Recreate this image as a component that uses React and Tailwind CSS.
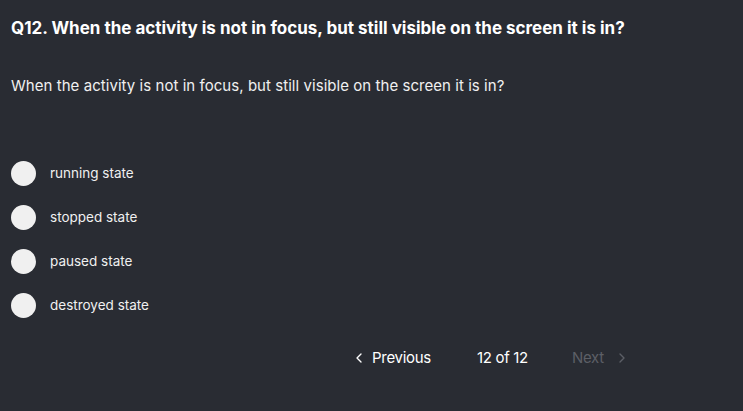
import React from 'react';
import { ChevronLeft, ChevronRight } from 'lucide-react';

const OPTIONS = ['running state', 'stopped state', 'paused state', 'destroyed state'];

export default function App() {
  return (
    <div className="w-[743px] h-[411px] bg-[#292c33] text-white px-[11px] pt-[17px]" style={{ fontFamily: 'Inter, "Noto Sans", sans-serif' }}>
      <h1 className="text-[17px] font-bold leading-[22px]">
        Q12. When the activity is not in focus, but still visible on the screen it is in?
      </h1>
      <p className="mt-[37px] text-[15px] leading-[20px] text-[#f0f0f0] tracking-[0.05px]">
        When the activity is not in focus, but still visible on the screen it is in?
      </p>
      <div className="mt-[65px] flex flex-col gap-[19px]">
        {OPTIONS.map((opt) => (
          <label key={opt} className="flex items-center gap-[14px] h-[25px]">
            <span className="w-[25px] h-[25px] rounded-full bg-[#f0f0f0]" />
            <span className="text-[13.5px] text-[#f0f0f0]">{opt}</span>
          </label>
        ))}
      </div>
      <div className="mt-[29px] flex items-center text-[15px] tracking-[-0.3px]">
        <div className="ml-[340px] flex items-center gap-[5px]">
          <ChevronLeft size={16} strokeWidth={2} />
          <span>Previous</span>
        </div>
        <span className="ml-[46px]">12 of 12</span>
        <div className="ml-[44px] flex items-center gap-[10px] text-[#5c5f66]">
          <span>Next</span>
          <ChevronRight size={16} strokeWidth={2} />
        </div>
      </div>
    </div>
  );
}
